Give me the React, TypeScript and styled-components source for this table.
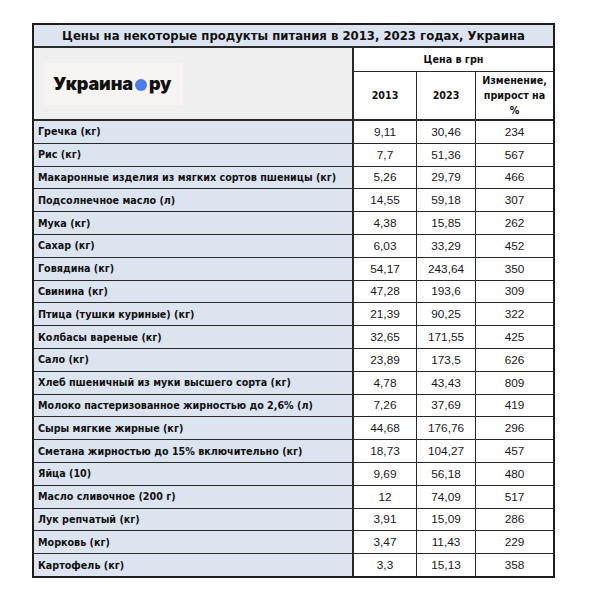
import React from "react";
import styled, { createGlobalStyle } from "styled-components";

type Row = { name: string; y2013: string; y2023: string; change: string };

const rows: Row[] = [
    { name: "Гречка (кг)", y2013: "9,11", y2023: "30,46", change: "234" },
    { name: "Рис (кг)", y2013: "7,7", y2023: "51,36", change: "567" },
    { name: "Макаронные изделия из мягких сортов пшеницы (кг)", y2013: "5,26", y2023: "29,79", change: "466" },
    { name: "Подсолнечное масло (л)", y2013: "14,55", y2023: "59,18", change: "307" },
    { name: "Мука (кг)", y2013: "4,38", y2023: "15,85", change: "262" },
    { name: "Сахар (кг)", y2013: "6,03", y2023: "33,29", change: "452" },
    { name: "Говядина (кг)", y2013: "54,17", y2023: "243,64", change: "350" },
    { name: "Свинина (кг)", y2013: "47,28", y2023: "193,6", change: "309" },
    { name: "Птица (тушки куриные) (кг)", y2013: "21,39", y2023: "90,25", change: "322" },
    { name: "Колбасы вареные (кг)", y2013: "32,65", y2023: "171,55", change: "425" },
    { name: "Сало (кг)", y2013: "23,89", y2023: "173,5", change: "626" },
    { name: "Хлеб пшеничный из муки высшего сорта (кг)", y2013: "4,78", y2023: "43,43", change: "809" },
    { name: "Молоко пастеризованное жирностью до 2,6% (л)", y2013: "7,26", y2023: "37,69", change: "419" },
    { name: "Сыры мягкие жирные (кг)", y2013: "44,68", y2023: "176,76", change: "296" },
    { name: "Сметана жирностью до 15% включительно (кг)", y2013: "18,73", y2023: "104,27", change: "457" },
    { name: "Яйца (10)", y2013: "9,69", y2023: "56,18", change: "480" },
    { name: "Масло сливочное (200 г)", y2013: "12", y2023: "74,09", change: "517" },
    { name: "Лук репчатый (кг)", y2013: "3,91", y2023: "15,09", change: "286" },
    { name: "Морковь (кг)", y2013: "3,47", y2023: "11,43", change: "229" },
    { name: "Картофель (кг)", y2013: "3,3", y2023: "15,13", change: "358" },
];

const GlobalStyle = createGlobalStyle`
    html, body {
        margin: 0;
        padding: 0;
        background: #ffffff;
    }
`;

const Page = styled.div`
    padding: 23px 0 0 32px;
`;

const Table = styled.div`
    display: grid;
    grid-template-columns: 319px 62px 58px 77px;
    grid-template-rows: 22px 23px 48px repeat(20, 21.8px);
    gap: 1px;
    width: 519px;
    background: #2a2a2a;
    border: 2px solid #1e1e1e;
`;

const boldFont = `"DejaVu Sans", Tahoma, sans-serif`;

const Title = styled.div`
    grid-column: 1 / 5;
    background: #dce4f0;
    border-bottom: 1px solid #2a2a2a;
    display: flex;
    align-items: center;
    justify-content: center;
    font-family: ${boldFont};
    font-weight: bold;
    font-size: 11.7px;
    color: #111;
`;

const LogoCell = styled.div`
    grid-column: 1;
    grid-row: 2 / 4;
    background: #f0f0f0;
    border-right: 1px solid #2a2a2a;
    border-bottom: 1px solid #2a2a2a;
    display: flex;
    align-items: center;
    padding-left: 10px;
`;

const LogoBox = styled.div`
    display: flex;
    align-items: center;
    height: 42px;
    padding: 0 12px 0 9px;
    background: #f7f4f3;
    font-family: Inter, "Noto Sans", sans-serif;
    font-weight: 900;
    font-size: 18px;
    letter-spacing: -0.1px;
    color: #111;
`;

const Dot = styled.span`
    width: 12px;
    height: 12px;
    border-radius: 50%;
    background: #4b7df2;
    margin: 3px 2px 0 2px;
`;

const HeadCell = styled.div<{ $span?: number; $last?: boolean }>`
    grid-column: span ${(p) => p.$span ?? 1};
    background: #ffffff;
    border-bottom: ${(p) => (p.$last ? "1px solid #2a2a2a" : "none")};
    display: flex;
    align-items: center;
    justify-content: center;
    text-align: center;
    font-family: ${boldFont};
    font-weight: bold;
    font-size: 9.6px;
    line-height: 15px;
    color: #111;
`;

const NameCell = styled.div`
    background: #dce4f0;
    border-right: 1px solid #2a2a2a;
    display: flex;
    align-items: center;
    padding-left: 4px;
    font-family: ${boldFont};
    font-weight: bold;
    font-size: 9.6px;
    color: #111;
    white-space: nowrap;
`;

const NumCell = styled.div`
    background: #ffffff;
    display: flex;
    align-items: center;
    justify-content: center;
    font-family: "Liberation Sans", Arial, sans-serif;
    font-size: 11.8px;
    color: #1a1a1a;
`;

export default function App() {
    return (
        <>
            <GlobalStyle />
            <Page>
                <Table>
                    <Title>Цены на некоторые продукты питания в 2013, 2023 годах, Украина</Title>
                    <LogoCell>
                        <LogoBox>
                            Украина
                            <Dot />
                            ру
                        </LogoBox>
                    </LogoCell>
                    <HeadCell $span={3}>Цена в грн</HeadCell>
                    <HeadCell $last>2013</HeadCell>
                    <HeadCell $last>2023</HeadCell>
                    <HeadCell $last>
                        Изменение,
                        <br />
                        прирост на
                        <br />%
                    </HeadCell>
                    {rows.map((r) => (
                        <React.Fragment key={r.name}>
                            <NameCell>{r.name}</NameCell>
                            <NumCell>{r.y2013}</NumCell>
                            <NumCell>{r.y2023}</NumCell>
                            <NumCell>{r.change}</NumCell>
                        </React.Fragment>
                    ))}
                </Table>
            </Page>
        </>
    );
}
